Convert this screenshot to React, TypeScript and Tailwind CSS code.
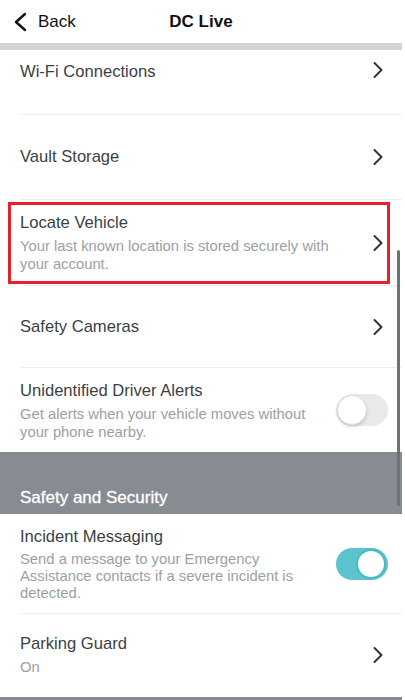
import React from 'react';

const font = { fontFamily: '"Liberation Sans", Arial, sans-serif' };

const Chevron = () => (
  <svg width="12" height="18" viewBox="0 0 12 18" className="shrink-0 mr-[-2px]">
    <path d="M2.5 2 L9.5 9 L2.5 16" fill="none" stroke="#2f3438" strokeWidth="2" strokeLinecap="round" strokeLinejoin="round" />
  </svg>
);

const Toggle = ({ on }: { on: boolean }) =>
  on ? (
    <div className="w-[52px] h-[32px] rounded-full bg-[#5ac3ce] flex items-center justify-end p-[2px] shrink-0 mr-[-6px]">
      <div className="w-[30px] h-[30px] rounded-full bg-white border-2 border-[#4fb8c4]" />
    </div>
  ) : (
    <div className="w-[52px] h-[32px] rounded-full bg-[#e9e9ec] flex items-center p-[1px] shrink-0 mr-[-6px]">
      <div className="w-[30px] h-[30px] rounded-full bg-white border border-[#dcdcdc] shadow-[0_2px_3px_rgba(0,0,0,0.15)]" />
    </div>
  );

const Divider = () => <div className="ml-5 h-px bg-[#efefef]" />;

const Row = ({
  title,
  desc,
  right,
  className,
  descLeading = 'leading-[18px]',
}: {
  title: string;
  desc?: string;
  right: React.ReactNode;
  className: string;
  descLeading?: string;
}) => (
  <div className={`flex items-center pl-5 pr-[20px] ${className}`}>
    <div className="flex-1 pr-6">
      <div className="text-[16.6px] leading-[22px] text-[#3a3f44]">{title}</div>
      {desc && <div className={`text-[14.8px] text-[#9b9fa4] mt-[3px] ${descLeading}`}>{desc}</div>}
    </div>
    {right}
  </div>
);

export default function App() {
  return (
    <div className="w-[405px] h-[700px] bg-white overflow-hidden relative" style={font}>
      <div className="w-[402px]">
        {/* Header */}
        <div className="h-[43px] flex items-center relative">
          <div className="flex items-center pl-[12px] gap-[8px]">
            <svg width="18" height="20" viewBox="0 0 18 20">
              <path d="M13 2 L4 10 L13 18" fill="none" stroke="#111" strokeWidth="2.4" strokeLinecap="round" strokeLinejoin="round" />
            </svg>
            <span className="text-[17px] text-[#111]">Back</span>
          </div>
          <div className="absolute left-0 right-0 text-center text-[17px] font-bold text-[#111] pointer-events-none">DC Live</div>
        </div>
        <div className="h-[7px] bg-[#d2d3d6]" />

        <Row title="Wi-Fi Connections" right={<Chevron />} className="h-[64px] items-start pt-[11px]" />
        <Divider />
        <Row title="Vault Storage" right={<Chevron />} className="h-[84px]" />
        <Divider />
        <div className="relative">
          <Row
            title="Locate Vehicle"
            desc="Your last known location is stored securely with your account."
            right={<Chevron />}
            className="h-[85px]"
          />
          <div className="absolute left-[8px] top-[2px] w-[382px] h-[82px] border-[3px] border-[#e8202a] pointer-events-none" />
        </div>
        <Divider />
        <Row title="Safety Cameras" right={<Chevron />} className="h-[81px]" />
        <Divider />
        <Row
          title="Unidentified Driver Alerts"
          desc="Get alerts when your vehicle moves without your phone nearby."
          right={<Toggle on={false} />}
          className="h-[84px]"
        />

        <div className="h-[62px] bg-[#878c92] flex items-end pl-5 pb-[4px]">
          <span className="text-[17px] text-white leading-[24px]" style={{ WebkitTextStroke: '0.3px white' }}>
            Safety and Security
          </span>
        </div>

        <Row
          title="Incident Messaging"
          desc="Send a message to your Emergency Assistance contacts if a severe incident is detected."
          right={<Toggle on={true} />}
          className="h-[99px]"
          descLeading="leading-[17px]"
        />
        <Divider />
        <Row title="Parking Guard" desc="On" right={<Chevron />} className="h-[83px] pb-[2px]" />
        <div className="h-[7px] bg-[#878c92]" />
      </div>

      {/* scrollbar */}
      <div className="absolute left-[397px] top-[250px] w-[3px] h-[256px] rounded-full bg-[#6f7175]" />
    </div>
  );
}
